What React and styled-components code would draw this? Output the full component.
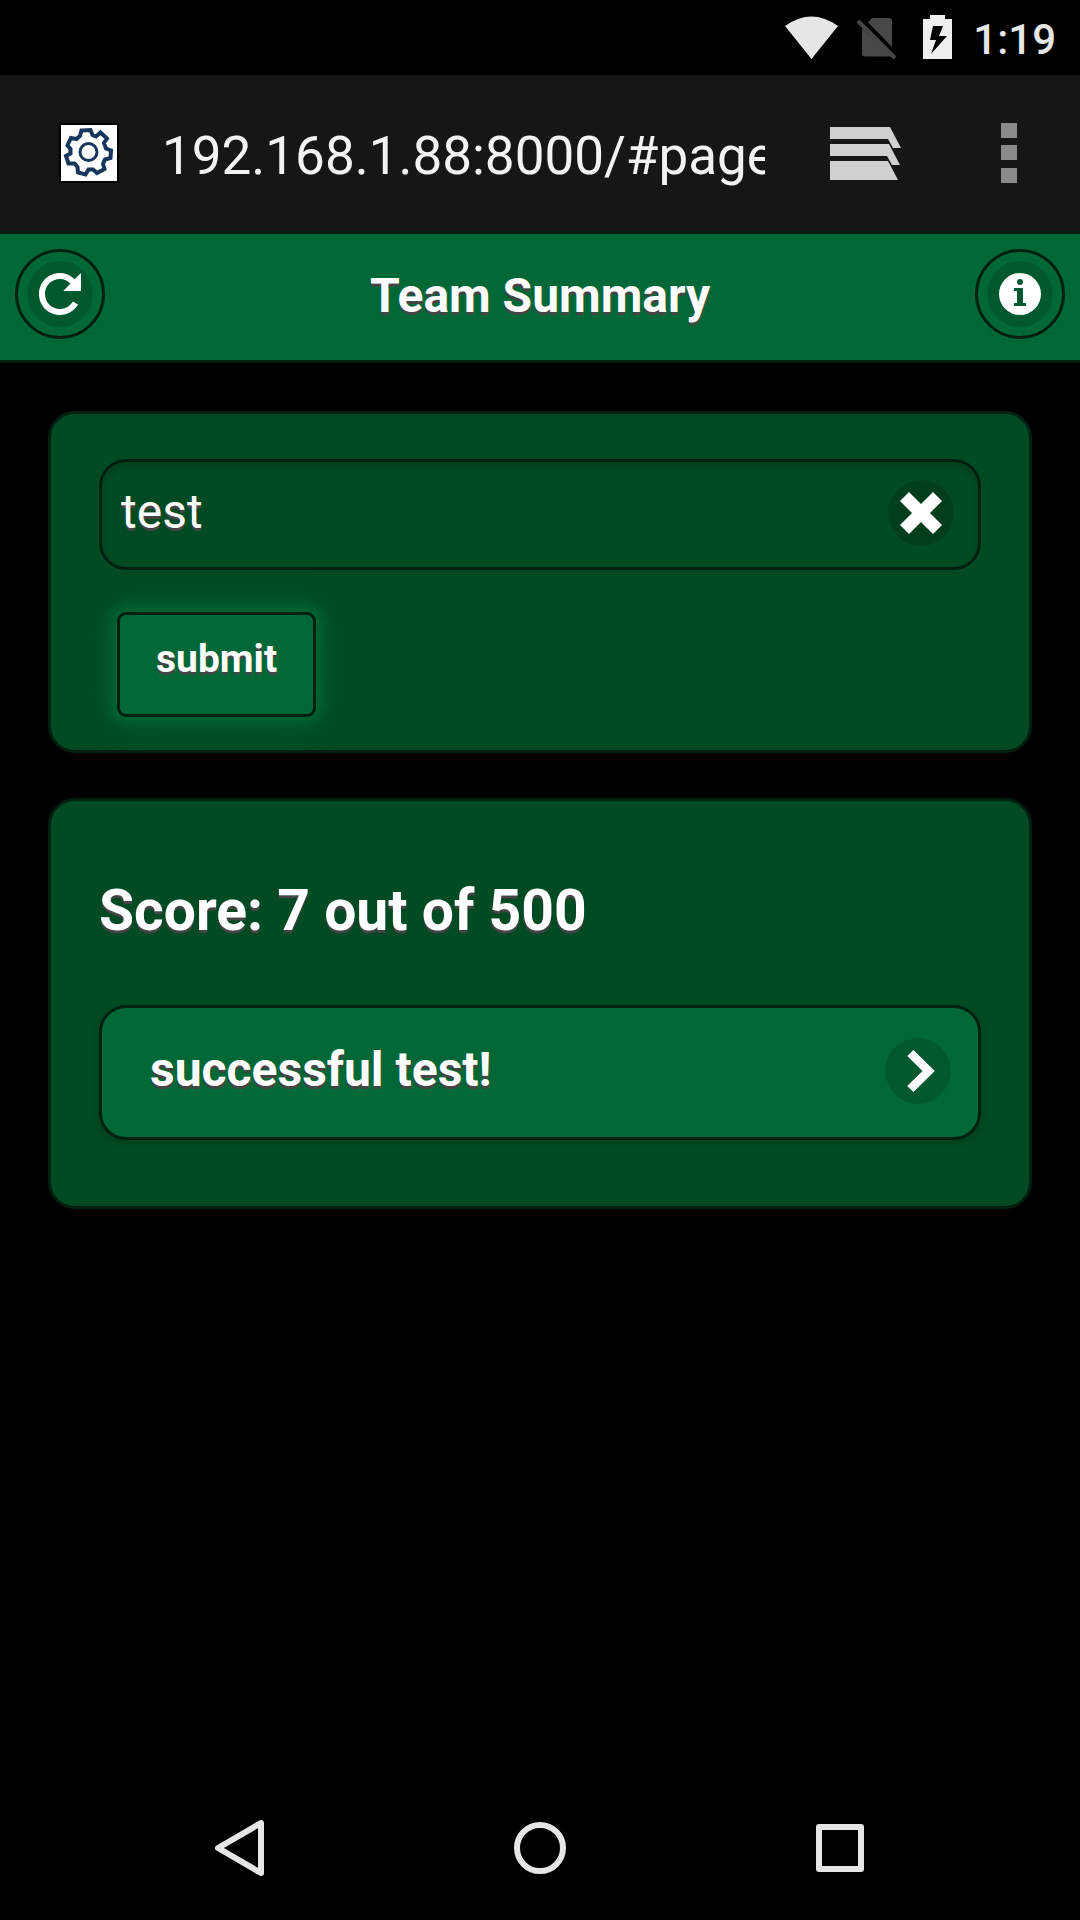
import React, { useState } from 'react';
import styled, { createGlobalStyle } from 'styled-components';

const color = {
  edge: '#002110',
  bar: '#006837',
  panel: '#004b23',
  chrome: '#161616',
  light: '#e6e6e6',
};

const GlobalStyle = createGlobalStyle`
  * { box-sizing: border-box; }
  body {
    margin: 0;
    background: #000;
    color: #fff;
    font-family: Roboto, "Liberation Sans", sans-serif;
    font-size: 48px;
  }
  button, input { font: inherit; color: inherit; }
  svg { display: block; }
`;

const Screen = styled.div`
  min-height: 100vh;
  display: flex;
  flex-direction: column;
`;

const StatusBar = styled.div`
  height: 75px;
  padding: 0 24px 0 0;
  display: flex;
  justify-content: flex-end;
  align-items: center;
  color: ${color.light};
`;

const StatusIcons = styled.div`
  display: flex;
  align-items: center;
  margin-right: 21px;
`;

const Clock = styled.time`
  font-size: 42px;
  line-height: 48px;
  font-weight: 500;
  padding-top: 4px;
`;

const BrowserBar = styled.div`
  height: 156px;
  padding: 0 52px 0 59px;
  display: flex;
  align-items: center;
  background: ${color.chrome};
`;

const Favicon = styled.span`
  flex: none;
  width: 60px;
  height: 60px;
  margin-right: 43px;
  border: 2px solid #000;
  background: #fff;
`;

const Address = styled.input`
  flex: 1;
  min-width: 0;
  height: 72px;
  padding: 6px 0 0;
  border: 0;
  outline: 0;
  background: none;
  color: #f3f3f3;
  font-size: 53px;
`;

const BareButton = styled.button`
  flex: none;
  padding: 0;
  border: 0;
  background: none;
  display: flex;
  align-items: center;
  justify-content: center;
`;

const TabsButton = styled(BareButton)`
  margin: 0 88px 0 65px;
`;

const MenuButton = styled(BareButton)`
  width: 39px;
`;

const Header = styled.header`
  height: 132px;
  padding: 0 15px;
  display: flex;
  align-items: center;
  justify-content: space-between;
  border: solid ${color.edge};
  border-width: 3px 0;
  background: ${color.bar};
  text-shadow: 0 3px 0 #444;
`;

const Title = styled.h1`
  margin: 0 0 3px;
  font-size: 48px;
  line-height: 60px;
`;

const RoundButton = styled(BareButton)`
  width: 90px;
  height: 90px;
  margin-bottom: 6px;
  border: 3px solid ${color.edge};
  border-radius: 50%;
`;

const Disc = styled.span`
  flex: none;
  width: 66px;
  height: 66px;
  border-radius: 50%;
  background: rgba(0, 0, 0, 0.15);
  display: flex;
  align-items: center;
  justify-content: center;
`;

const Content = styled.main`
  flex: 1;
  padding: 48px;
  display: flex;
  flex-direction: column;
  gap: 45px;
  text-shadow: 0 3px 0 #444;
`;

const Panel = styled.section`
  padding: ${(p) => p.$padding};
  border: 3px solid ${color.edge};
  border-radius: 27px;
  background: ${color.panel};
`;

const Field = styled.div`
  height: 111px;
  padding: 0 24px 3px 19px;
  display: flex;
  align-items: center;
  border: 3px solid ${color.edge};
  border-radius: 27px;
  box-shadow: inset 0 3px 9px rgba(0, 0, 0, 0.2);
`;

const TextInput = styled.input`
  flex: 1;
  min-width: 0;
  padding: 0 0 3px;
  border: 0;
  outline: 0;
  background: none;
  font-size: 48px;
  line-height: 60px;
  text-shadow: inherit;
`;

const Submit = styled.button`
  display: block;
  height: 105px;
  margin: 42px 0 0 18px;
  padding: 0 36px 12px;
  border: 3px solid ${color.edge};
  border-radius: 9px;
  background: ${color.bar};
  box-shadow: 0 0 12px 3px ${color.bar}, 0 0 30px 3px ${color.bar};
  font-size: 39px;
  font-weight: 700;
  text-shadow: inherit;
`;

const Score = styled.h3`
  margin: 0 0 58px;
  font-size: 57px;
  line-height: 72px;
`;

const ResultButton = styled.button`
  width: 100%;
  height: 135px;
  padding: 0 27px 3px 48px;
  display: flex;
  align-items: center;
  justify-content: space-between;
  border: 3px solid ${color.edge};
  border-radius: 27px;
  background: ${color.bar};
  box-shadow: 0 3px 9px rgba(0, 0, 0, 0.2);
  font-weight: 700;
  text-align: left;
  text-shadow: inherit;
`;

const ResultLabel = styled.span`
  padding-bottom: 3px;
`;

const NavBar = styled.nav`
  height: 144px;
  display: flex;
  justify-content: center;
`;

const NavButton = styled(BareButton)`
  width: 300px;
`;

const Glyph = ({ children }) => (
  <svg width="42" height="42" viewBox="0 0 14 14" fill="#fff" aria-hidden="true">
    {children}
  </svg>
);

export default function App() {
  const [team, setTeam] = useState('test');
  const [url, setUrl] = useState('192.168.1.88:8000/#page');

  return (
    <Screen>
      <GlobalStyle />
      <StatusBar>
        <StatusIcons>
          <svg width="167" height="46" viewBox="0 0 167 46" aria-hidden="true">
            <path d="M0 11Q26.500-8 53 11L26.500 44Z" fill="#e6e6e6" />
            <path
              d="M87 3h17q3 0 3 3v26L83 7.500ZM77 13l30 29-1-.5H80q-3 0-3-3Z"
              fill="#474747"
            />
            <path d="M73 6l37 37" stroke="#474747" strokeWidth="4" />
            <path
              d="M145 0h15v4h7v40h-29V4h7zM148 11l-3 14h6l-5 14 16-18h-8l4-10z"
              fill="#eee"
              fillRule="evenodd"
            />
          </svg>
        </StatusIcons>
        <Clock>1:19</Clock>
      </StatusBar>

      <BrowserBar>
        <Favicon>
          <svg width="56" height="56" viewBox="0 0 56 56" fill="none" stroke="#17365d" aria-hidden="true">
            <path
              strokeWidth="4"
              d="M20.500 5.500L29.500 5L31.500 10L35 11.500L39.500 7.500L46 13.500L43 18L45 23.500L50 25.500L49.500 33L44 34.500L42 39L43.500 44L36 48L32 44.500L27.500 44.500L24.500 49.500L17 47.500L16.500 42L13.500 38.500L7.500 38.500L5 31L9.500 28.500L9.500 24L6.500 20.500L10 13L15.500 14L19 11Z"
            />
            <circle cx="27.500" cy="27" r="8.500" strokeWidth="3" />
          </svg>
        </Favicon>
        <Address aria-label="Address" value={url} onChange={(e) => setUrl(e.target.value)} />
        <TabsButton aria-label="Tabs">
          <svg width="71" height="54" viewBox="0 0 71 54" fill="#d0d0d0" aria-hidden="true">
            <path d="M0 1h60l11 21h-8l-5-9H0zM0 18h59l11 21h-8l-5-9H0zM0 35h58l10 19H0z" />
          </svg>
        </TabsButton>
        <MenuButton aria-label="Menu">
          <svg width="16" height="60" viewBox="0 0 16 60" fill="#8a8a8a" aria-hidden="true">
            <path d="M0 0h16v15H0zM0 22h16v15H0zM0 45h16v15H0z" />
          </svg>
        </MenuButton>
      </BrowserBar>

      <Header>
        <RoundButton aria-label="Refresh">
          <Disc>
            <Glyph>
              <path d="M14 6V0l-2.100 2.100C10.600.8 8.900 0 7 0 3.100 0 0 3.100 0 7s3.100 7 7 7c2.600 0 4.800-1.400 6-3.500l-1.700-1C10.400 11 8.800 12 7 12c-2.800 0-5-2.200-5-5s2.200-5 5-5c1.400 0 2.600.6 3.500 1.500L8.100 6z" />
            </Glyph>
          </Disc>
        </RoundButton>
        <Title>Team Summary</Title>
        <RoundButton aria-label="Information">
          <Disc>
            <Glyph>
              <path
                fillRule="evenodd"
                d="M7 0a7 7 0 1 0 0 14A7 7 0 0 0 7 0zM7 2a1 1 0 1 1 0 2 1 1 0 0 1 0-2zM9 11H5v-1h1V6H5V5h3v5h1z"
              />
            </Glyph>
          </Disc>
        </RoundButton>
      </Header>

      <Content>
        <Panel as="form" $padding="45px 48px 33px" onSubmit={(e) => e.preventDefault()}>
          <Field>
            <TextInput aria-label="Team" value={team} onChange={(e) => setTeam(e.target.value)} />
            <BareButton type="button" aria-label="Clear text" onClick={() => setTeam('')}>
              <Disc>
                <Glyph>
                  <path d="M14 3l-3-3-4 4-4-4-3 3 4 4-4 4 3 3 4-4 4 4 3-3-4-4z" />
                </Glyph>
              </Disc>
            </BareButton>
          </Field>
          <Submit type="submit">submit</Submit>
        </Panel>

        <Panel $padding="74px 48px 66px">
          <Score>Score: 7 out of 500</Score>
          <ResultButton>
            <ResultLabel>successful test!</ResultLabel>
            <Disc>
              <Glyph>
                <path d="M3.400 12l2.100 2 7.100-7-7.100-7-2.100 2 5.100 5z" />
              </Glyph>
            </Disc>
          </ResultButton>
        </Panel>
      </Content>

      <NavBar aria-label="System">
        <NavButton aria-label="Back">
          <svg width="50" height="56" viewBox="0 0 50 56" fill="none" stroke="#e6e6e6" strokeWidth="6" strokeLinejoin="round" aria-hidden="true">
            <path d="M46 3v50L3 28z" />
          </svg>
        </NavButton>
        <NavButton aria-label="Home">
          <svg width="52" height="52" viewBox="0 0 52 52" fill="none" stroke="#e6e6e6" strokeWidth="6" aria-hidden="true">
            <circle cx="26" cy="26" r="23" />
          </svg>
        </NavButton>
        <NavButton aria-label="Recent apps">
          <svg width="48" height="48" viewBox="0 0 48 48" fill="none" stroke="#e6e6e6" strokeWidth="6" strokeLinejoin="round" aria-hidden="true">
            <path d="M3 3h42v42H3z" />
          </svg>
        </NavButton>
      </NavBar>
    </Screen>
  );
}
